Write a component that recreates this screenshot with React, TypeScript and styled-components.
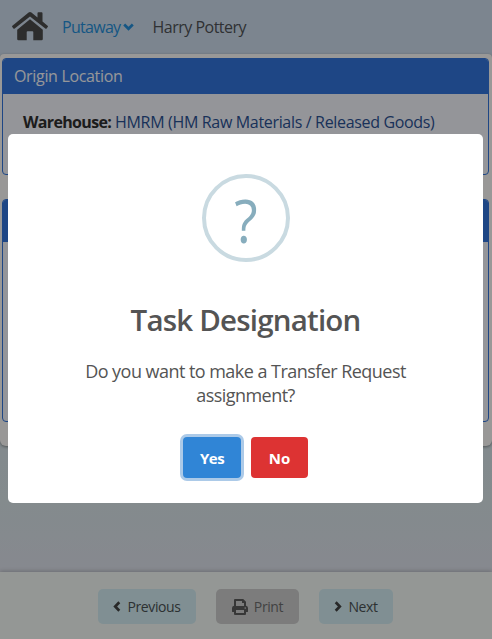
import React from "react";
import styled, { createGlobalStyle } from "styled-components";

const GlobalStyle = createGlobalStyle`
  *, *::before, *::after { box-sizing: border-box; }
  body { margin: 0; overflow: hidden; font-family: "Open Sans", "Noto Sans", sans-serif; }
  button { font-family: inherit; }
`;

const Page = styled.div`
  height: 639px;
  display: flex;
  flex-direction: column;
  background: linear-gradient(#cfdeee 0, #cfdeee 54px, #dce8ec 500px, #e0e4ee 572px);
`;

const TopBar = styled.nav`
  height: 54px;
  flex: none;
  display: flex;
  align-items: center;
  padding: 0 0 1px 12px;
  font-size: 16px;
  line-height: 24px;
  color: #4b4b4b;
`;

const Icon = styled.svg`
  display: block;
  flex: none;
  fill: currentColor;
`;

const StrokeIcon = styled(Icon)`
  fill: none;
  stroke: currentColor;
  stroke-width: 2.7;
`;

const NavItem = styled.span<{ $active?: boolean; $gap: number; $spacing: number }>`
  display: flex;
  align-items: center;
  margin-left: ${(p) => p.$gap}px;
  letter-spacing: ${(p) => p.$spacing}px;
  white-space: nowrap;
  color: ${(p) => (p.$active ? "#2590dc" : "#4f5256")};
  svg { margin-left: 3px; }
`;

const Content = styled.main`
  height: 392px;
  flex: none;
  display: flex;
  flex-direction: column;
  gap: 24px;
  padding: 4px 3px 0 2px;
  background: #fffdfc;
  border-radius: 4px 4px 6px 6px;
  box-shadow: 0 1px 3px rgba(0, 0, 0, 0.4);
`;

const Card = styled.section<{ $height: number }>`
  height: ${(p) => p.$height}px;
  border: 1px solid #3276de;
  border-radius: 4px;
  background: #f7f8ff;
  overflow: hidden;
`;

const CardHeader = styled.header<{ $height: number }>`
  height: ${(p) => p.$height}px;
  padding: 5px 11px;
  background: #3276de;
  color: #fbfbff;
  font-size: 16px;
  line-height: 24px;
  letter-spacing: -0.33px;
`;

const Field = styled.div`
  padding: 16px 20px;
  font-size: 16px;
  line-height: 24px;
  letter-spacing: -0.33px;
  white-space: nowrap;
  color: #2b5395;
  strong { color: #303030; letter-spacing: -0.65px; }
`;

const Footer = styled.footer`
  height: 67px;
  margin-top: auto;
  display: flex;
  justify-content: center;
  align-items: flex-start;
  gap: 20px;
  padding: 17px 1px 0 0;
  background: #f7fcf8;
  box-shadow: 0 -1px 4px rgba(0, 0, 0, 0.2);
`;

const FooterButton = styled.button<{ $width: number; $muted?: boolean }>`
  width: ${(p) => p.$width}px;
  height: 35px;
  display: flex;
  align-items: center;
  justify-content: center;
  gap: 6px;
  padding: 0;
  border: 0;
  border-radius: 5px;
  background: ${(p) => (p.$muted ? "#cfcfcf" : "#d5eff5")};
  color: ${(p) => (p.$muted ? "#6e6e6e" : "#4b5254")};
  font-size: 14px;
  letter-spacing: -0.4px;
  svg { color: ${(p) => (p.$muted ? "#5c5c5c" : "#444")}; }
`;

const Overlay = styled.div`
  position: fixed;
  inset: 0;
  padding: 134px 9px 0 8px;
  background: rgba(0, 0, 0, 0.4);
`;

const Dialog = styled.div`
  height: 369px;
  display: flex;
  flex-direction: column;
  align-items: center;
  padding-top: 40px;
  border-radius: 5px;
  background: #fff;
`;

const QuestionMark = styled.div`
  width: 88px;
  height: 88px;
  display: flex;
  align-items: center;
  justify-content: center;
  border: 4px solid #c9dae1;
  border-radius: 50%;
  color: #87adbd;
  font-size: 60px;
  line-height: 80px;
  span { transform: translateY(2px) scaleX(0.9); }
`;

const Title = styled.h2`
  margin: 37px 0 0;
  font-size: 29.5px;
  line-height: 42px;
  font-weight: 600;
  letter-spacing: -0.8px;
  color: #545454;
`;

const Message = styled.p`
  margin: 18px 0 0;
  text-align: center;
  font-size: 18px;
  line-height: 24px;
  letter-spacing: -0.54px;
  color: #545454;
`;

const Actions = styled.div`
  display: flex;
  gap: 10px;
  margin-top: 30px;
`;

const ActionButton = styled.button<{ $primary?: boolean }>`
  width: ${(p) => (p.$primary ? 58 : 57)}px;
  height: 41px;
  padding: 1px 0 0;
  border: 0;
  border-radius: 4px;
  background: ${(p) => (p.$primary ? "#3085d6" : "#dd3333")};
  box-shadow: ${(p) => (p.$primary ? "0 0 0 3px #accae8" : "none")};
  color: #fff;
  font-size: 15px;
  font-weight: 700;
  letter-spacing: ${(p) => (p.$primary ? -0.5 : 0)}px;
`;

const HomeIcon = () => (
  <Icon width="36" height="29" viewBox="0 0 36 29">
    <path d="M16.6.6a2.2 2.2 0 0 1 2.8 0l6.1 5V1.2q0-.9.9-.9h3.2q.9 0 .9.9v8.4l5.1 4.2q.7.6.1 1.3l-1.1 1.3q-.6.7-1.3.1L18 4.4 2.7 16.5q-.7.6-1.3-.1L.3 15.1q-.5-.7.1-1.3z" />
    <path d="M18 7.3 30.8 17.7V27q0 1.3-1.3 1.3h-8.2v-8.2q0-.9-.9-.9h-4.8q-.9 0-.9.9v8.2H6.5q-1.3 0-1.3-1.3v-9.3z" />
  </Icon>
);

const ChevronDown = () => (
  <StrokeIcon width="11" height="8" viewBox="0 0 11 8">
    <path d="m1.2 1.5 4.3 4.3 4.3-4.3" />
  </StrokeIcon>
);

const ChevronLeft = () => (
  <StrokeIcon width="8" height="11" viewBox="0 0 8 11">
    <path d="M6.3 1.2 2.2 5.5l4.1 4.3" />
  </StrokeIcon>
);

const ChevronRight = () => (
  <StrokeIcon width="8" height="11" viewBox="0 0 8 11">
    <path d="m1.7 1.2 4.1 4.3-4.1 4.3" />
  </StrokeIcon>
);

const PrintIcon = () => (
  <Icon width="16" height="16" viewBox="0 0 16 16">
    <path
      fillRule="evenodd"
      d="M3 0h8.2L14 2.8v3.9q2 .3 2 2.3v3.6q0 .4-.4.4H14v2q0 1-1 1H3q-1 0-1-1v-2H.4q-.4 0-.4-.4V9q0-2 2-2.3V1q0-1 1-1zm1 2v5h8V4h-1.4q-.6 0-.6-.6V2zm0 9v3h8v-3zm9.2-2.7a.8.8 0 1 0 0 1.6.8.8 0 0 0 0-1.6z"
    />
  </Icon>
);

export default function App() {
  return (
    <>
      <GlobalStyle />
      <Page>
        <TopBar>
          <HomeIcon />
          <NavItem $active $gap={14} $spacing={-0.7}>
            Putaway <ChevronDown />
          </NavItem>
          <NavItem $gap={18} $spacing={-0.5}>Harry Pottery</NavItem>
        </TopBar>
        <Content>
          <Card $height={117}>
            <CardHeader $height={35}>Origin Location</CardHeader>
            <Field>
              <strong>Warehouse:</strong> HMRM (HM Raw Materials / Released Goods)
            </Field>
          </Card>
          <Card $height={223}>
            <CardHeader $height={42} />
          </Card>
        </Content>
        <Footer>
          <FooterButton $width={98}><ChevronLeft />Previous</FooterButton>
          <FooterButton $width={83} $muted><PrintIcon />Print</FooterButton>
          <FooterButton $width={74}><ChevronRight />Next</FooterButton>
        </Footer>
      </Page>
      <Overlay>
        <Dialog role="dialog" aria-modal="true">
          <QuestionMark><span>?</span></QuestionMark>
          <Title>Task Designation</Title>
          <Message>
            Do you want to make a Transfer Request
            <br />
            assignment?
          </Message>
          <Actions>
            <ActionButton $primary>Yes</ActionButton>
            <ActionButton>No</ActionButton>
          </Actions>
        </Dialog>
      </Overlay>
    </>
  );
}
